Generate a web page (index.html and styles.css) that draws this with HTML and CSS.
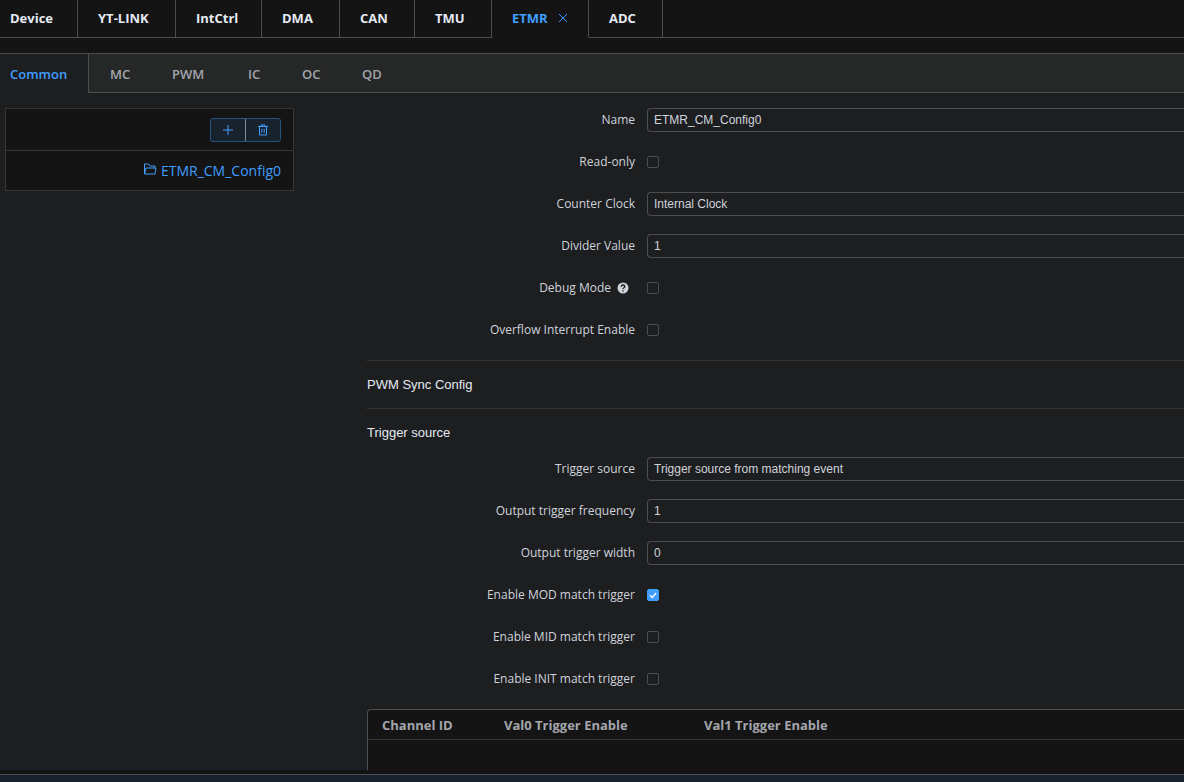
FILE: index.html
```html
<!DOCTYPE html>
<html lang="en">
<head>
    <meta charset="UTF-8">
    <meta name="viewport" content="width=device-width, initial-scale=1.0">
    <title>ETMR Config</title>
    <link rel="stylesheet" href="styles.css">
</head>
<body>
    <nav class="tabs">
        <button class="tab first">Device</button>
        <button class="tab">YT-LINK</button>
        <button class="tab">IntCtrl</button>
        <button class="tab">DMA</button>
        <button class="tab">CAN</button>
        <button class="tab">TMU</button>
        <button class="tab active">ETMR
            <svg class="close" viewBox="0 0 10 10"><path d="M1 1l8 8M9 1l-8 8"/></svg>
        </button>
        <button class="tab">ADC</button>
    </nav>

    <nav class="subtabs">
        <button class="subtab active">Common</button>
        <button class="subtab">MC</button>
        <button class="subtab">PWM</button>
        <button class="subtab">IC</button>
        <button class="subtab">OC</button>
        <button class="subtab">QD</button>
    </nav>

    <main class="content">
        <aside class="config-list">
            <div class="toolbar">
                <div class="button-group">
                    <button class="tool" aria-label="Add">
                        <svg viewBox="0 0 12 12"><path d="M6 1v10M1 6h10"/></svg>
                    </button>
                    <button class="tool" aria-label="Delete">
                        <svg viewBox="0 0 12 12"><path d="M1 2.500h10M4 2.500v-1.500h4v1.500M2.500 2.500v8.500h7v-8.500M4.800 4.800v4M7.200 4.800v4"/></svg>
                    </button>
                </div>
            </div>
            <a class="config-item" href="#">
                <svg viewBox="0 0 14 14"><path d="M1.500 12V2h4l1.500 2h5v2M1.500 12l1.500-6h10l-1 6z"/></svg>
                <span>ETMR_CM_Config0</span>
            </a>
        </aside>

        <form class="form">
            <div class="row">
                <label for="name">Name</label>
                <input class="field" type="text" id="name" value="ETMR_CM_Config0">
            </div>
            <div class="row">
                <label for="readonly">Read-only</label>
                <input class="check" type="checkbox" id="readonly">
            </div>
            <div class="row">
                <label for="clock">Counter Clock</label>
                <select class="field" id="clock"><option>Internal Clock</option></select>
            </div>
            <div class="row">
                <label for="divider">Divider Value</label>
                <input class="field" type="text" id="divider" value="1">
            </div>
            <div class="row">
                <label for="debug">Debug Mode
                    <svg class="help" viewBox="0 0 12 12"><circle cx="6" cy="6" r="5.500"/><path d="M4.300 4.800c0-2.400 3.500-2.200 3.500-.2 0 1.200-1.800 1.200-1.800 2.500M6 8.200v1.200"/></svg>
                </label>
                <input class="check" type="checkbox" id="debug">
            </div>
            <div class="row">
                <label for="overflow">Overflow Interrupt Enable</label>
                <input class="check" type="checkbox" id="overflow">
            </div>

            <h2 class="section">PWM Sync Config</h2>
            <h2 class="section">Trigger source</h2>

            <div class="row">
                <label for="source">Trigger source</label>
                <select class="field" id="source"><option>Trigger source from matching event</option></select>
            </div>
            <div class="row">
                <label for="freq">Output trigger frequency</label>
                <input class="field" type="text" id="freq" value="1">
            </div>
            <div class="row">
                <label for="width">Output trigger width</label>
                <input class="field" type="text" id="width" value="0">
            </div>
            <div class="row">
                <label for="mod">Enable MOD match trigger</label>
                <span class="check-wrap">
                    <input class="check" type="checkbox" id="mod" checked>
                    <svg class="tick" viewBox="0 0 12 12"><path d="M3 6.200l2.200 2.300L9.200 4"/></svg>
                </span>
            </div>
            <div class="row">
                <label for="mid">Enable MID match trigger</label>
                <input class="check" type="checkbox" id="mid">
            </div>
            <div class="row">
                <label for="init">Enable INIT match trigger</label>
                <input class="check" type="checkbox" id="init">
            </div>

            <div class="table-box">
                <table class="channels">
                    <thead>
                        <tr>
                            <th class="col-id">Channel ID</th>
                            <th class="col-val">Val0 Trigger Enable</th>
                            <th>Val1 Trigger Enable</th>
                        </tr>
                    </thead>
                </table>
            </div>
        </form>
    </main>

    <footer class="statusbar"></footer>
</body>
</html>
```

FILE: styles.css
```css
* {
    box-sizing: border-box;
}
body {
    margin: 0;
    height: 100vh;
    display: flex;
    flex-direction: column;
    overflow: hidden;
    background-color: #1d1e20;
    color: #cfd3dc;
    font-family: "Open Sans", "Noto Sans", sans-serif;
    font-size: 12px;
}
button {
    font-family: inherit;
    background: none;
    border: none;
    padding: 0;
    cursor: pointer;
}
svg {
    fill: none;
    stroke: currentColor;
}

/* module tabs */
.tabs {
    flex: none;
    display: grid;
    grid-template-columns: 78px 98px 86px 78px 75px 77px 97px 74px 1fr;
    height: 53px;
    padding-bottom: 15px;
    background-color: #141414;
}
.tabs::after {
    content: "";
    border-bottom: 1px solid #4c4d4f;
}
.tab {
    display: flex;
    align-items: center;
    padding: 0 0 2px 20px;
    border-right: 1px solid #4c4d4f;
    border-bottom: 1px solid #4c4d4f;
    color: #e5eaf3;
    font-size: 13px;
    font-weight: 700;
}
.tab.first {
    padding-left: 10px;
}
.tab.active {
    color: #409eff;
    border-bottom-color: #141414;
}
.close {
    width: 10px;
    height: 10px;
    margin-left: 10px;
}

/* config tabs */
.subtabs {
    flex: none;
    display: grid;
    grid-template-columns: 89px 62px 76px 54px 60px 60px;
    height: 40px;
    background-color: #262727;
    border-top: 1px solid #4c4d4f;
    box-shadow: inset 0 -1px #4c4d4f;
}
.subtab {
    padding-left: 21px;
    color: #a3a6ad;
    font-size: 13px;
    font-weight: 600;
    text-align: left;
}
.subtab.active {
    padding-left: 10px;
    color: #409eff;
    background-color: #1d1e20;
    border-right: 1px solid #4c4d4f;
}

.content {
    flex: 1;
    min-height: 0;
    display: flex;
    align-items: flex-start;
    gap: 73px;
    padding: 15px 0 0 5px;
    overflow: hidden;
}

/* config list */
.config-list {
    flex: none;
    width: 289px;
    background-color: #141414;
    border: 1px solid #363637;
}
.toolbar {
    display: flex;
    justify-content: flex-end;
    padding: 9px 12px 8px;
    border-bottom: 1px solid #363637;
}
.button-group {
    display: flex;
    border: 1px solid #265280;
    border-radius: 3px;
    background-color: #18222c;
}
.tool {
    display: flex;
    align-items: center;
    justify-content: center;
    width: 34px;
    height: 22px;
    color: #409eff;
}
.tool + .tool {
    width: 35px;
    border-left: 1px solid #7f8a97;
}
.tool svg {
    width: 12px;
    height: 12px;
}
.config-item {
    display: flex;
    align-items: center;
    justify-content: flex-end;
    gap: 4px;
    height: 39px;
    padding-right: 12px;
    color: #409eff;
    font-size: 14px;
    text-decoration: none;
}
.config-item svg {
    width: 14px;
    height: 14px;
    margin-bottom: 4px;
}

/* form */
.form {
    flex: 1;
    min-width: 0;
}
.row {
    display: flex;
    align-items: center;
    gap: 12px;
    height: 24px;
    margin-bottom: 18px;
}
.row label {
    flex: none;
    display: flex;
    align-items: center;
    justify-content: flex-end;
    width: 268px;
    line-height: 26px;
}
.help {
    width: 12px;
    height: 12px;
    margin: 0 6px;
    fill: #cfd3dc;
    stroke: none;
}
.help path {
    fill: none;
    stroke: #1d1e20;
    stroke-width: 1.4;
}
.field {
    flex: 1;
    min-width: 0;
    height: 24px;
    padding: 0 6px;
    appearance: none;
    color: #cfd3dc;
    background-color: transparent;
    border: 1px solid #4c4d4f;
    border-right: none;
    border-radius: 4px 0 0 4px;
    font-family: "Liberation Sans", Arial, sans-serif;
    font-size: 12px;
}
.check-wrap {
    position: relative;
    display: flex;
}
.check {
    flex: none;
    width: 12px;
    height: 12px;
    margin: 0;
    appearance: none;
    border: 1px solid #4c4d4f;
    border-radius: 2px;
}
.check:checked {
    background-color: #409eff;
    border-color: #409eff;
}
.tick {
    position: absolute;
    inset: 0;
    color: #fff;
    stroke-width: 1.3;
    pointer-events: none;
}
.section {
    height: 48px;
    margin: 0;
    border-top: 1px solid #363637;
    color: #e5eaf3;
    font-family: "Liberation Sans", Arial, sans-serif;
    font-size: 13px;
    font-weight: 400;
    line-height: 47px;
}
.section + .row {
    margin-top: 1px;
}

/* channel table */
.table-box {
    height: 100vh;
    background-color: #141414;
    border: 1px solid #4c4d4f;
    border-right: none;
    border-radius: 4px 0 0 0;
}
.channels {
    width: 100%;
    table-layout: fixed;
    border-collapse: separate;
    border-spacing: 0;
}
.channels th {
    height: 30px;
    padding: 0 0 0 14px;
    border-bottom: 1px solid #363637;
    color: #a3a6ad;
    font-size: 13px;
    font-weight: 700;
    text-align: left;
}
.col-id {
    width: 122px;
}
.col-val {
    width: 200px;
}

.statusbar {
    flex: none;
    height: 12px;
    border-top: 4px solid #141414;
    background-color: #18222c;
    box-shadow: inset 0 1px #4c4d4f;
}
```
